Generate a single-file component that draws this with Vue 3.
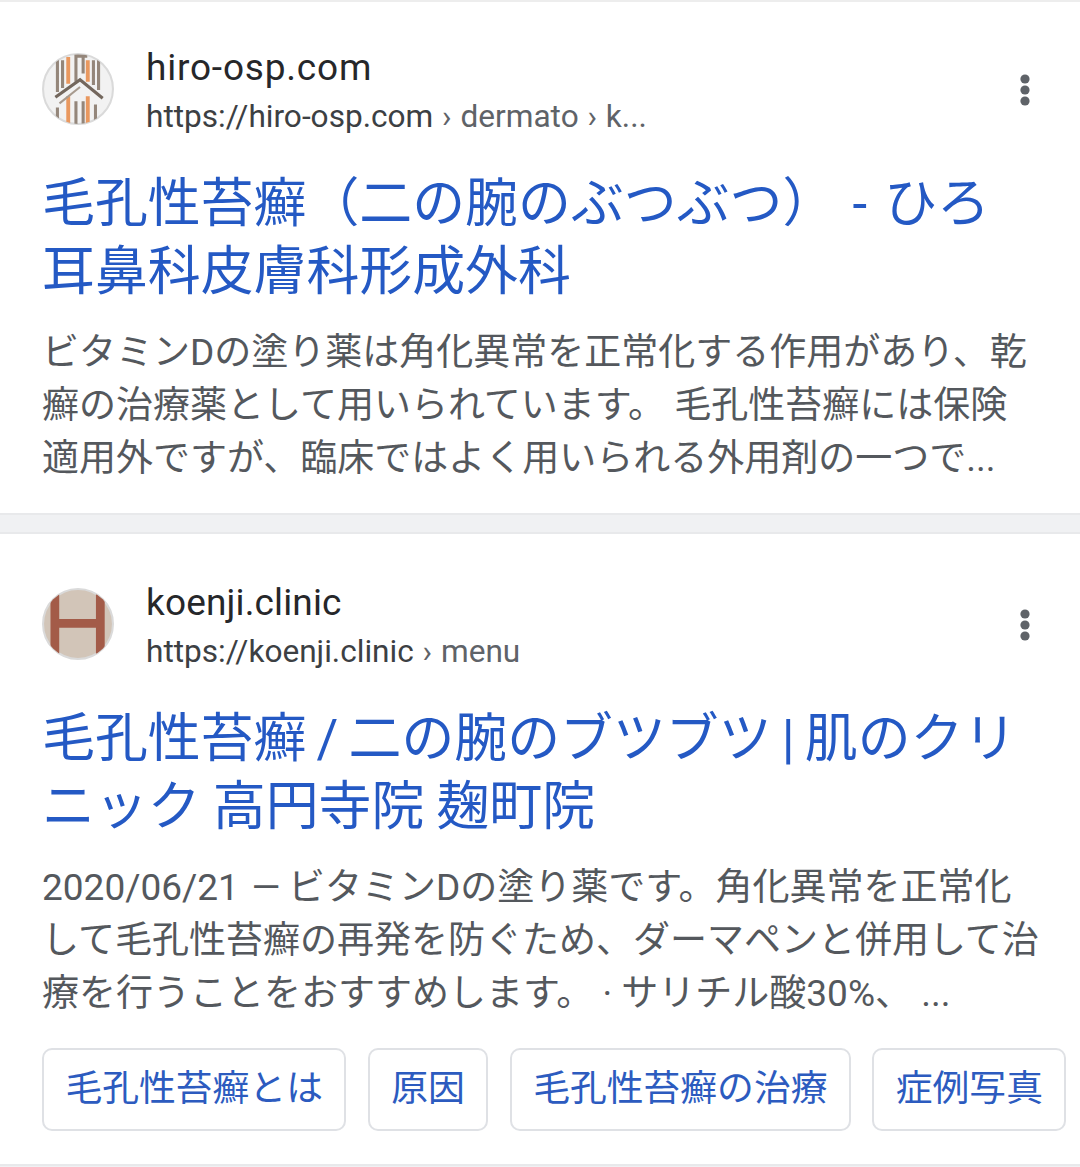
<script setup>
const results = [
  {
    site: "hiro-osp.com",
    url: "https://hiro-osp.com",
    path: " › dermato › k...",
    logo: "hiro",
    title: ["毛孔性苔癬（二の腕のぶつぶつ） - ひろ", "耳鼻科皮膚科形成外科"],
    snippet: [
      "ビタミンDの塗り薬は角化異常を正常化する作用があり、乾",
      "癬の治療薬として用いられています。 毛孔性苔癬には保険",
      "適用外ですが、臨床ではよく用いられる外用剤の一つで...",
    ],
    chips: [],
  },
  {
    site: "koenji.clinic",
    url: "https://koenji.clinic",
    path: " › menu",
    logo: "koenji",
    title: ["毛孔性苔癬 / 二の腕のブツブツ | 肌のクリ", "ニック 高円寺院 麹町院"],
    snippet: [
      "2020/06/21\u2004—\u2009ビタミンDの塗り薬です。角化異常を正常化",
      "して毛孔性苔癬の再発を防ぐため、ダーマペンと併用して治",
      "療を行うことをおすすめします。 · サリチル酸30%、 ...",
    ],
    chips: ["毛孔性苔癬とは", "原因", "毛孔性苔癬の治療", "症例写真"],
  },
];
</script>

<template>
  <div class="page">
    <div v-for="item in results" :key="item.site" class="card" :class="item.logo">
      <div class="head">
        <div class="logo">
          <svg v-if="item.logo === 'hiro'" width="72" height="72" viewBox="0 0 70 70">
            <clipPath id="hiro-clip"><circle cx="35" cy="35" r="34" /></clipPath>
            <circle cx="35" cy="35" r="34" fill="#f2f2f2" stroke="#dadada" stroke-width="2" />
            <g clip-path="url(#hiro-clip)" fill="none">
              <g stroke="#94867a" stroke-width="3">
                <path d="M15 7V38M20 7V34M33 28V3H44M40 3V20M50 7V31M55 7V36" />
                <path d="M15 53V66M33 47V70M40 47V70M52 50V66" />
              </g>
              <g stroke="#e9985f" stroke-width="3.8">
                <path d="M25.5 4V30M44.5 7V28M25.5 42V68M44.5 42V68" />
              </g>
              <path d="M13 43L37 26L59 44" stroke="#73675d" stroke-width="3" />
              <path d="M17 49L37 33" stroke="#a79a8e" stroke-width="2" />
            </g>
          </svg>
          <svg v-else width="72" height="72" viewBox="0 0 70 70">
            <clipPath id="koenji-clip"><circle cx="35" cy="35" r="34" /></clipPath>
            <circle cx="35" cy="35" r="34" fill="#d2c5b8" stroke="#dadada" stroke-width="2" />
            <path clip-path="url(#koenji-clip)" d="M12.5 6V64M56.7 6V64M12.5 34.5H56.7" fill="none" stroke="#a35b48" stroke-width="8.5" />
          </svg>
        </div>
        <div class="source">
          <div class="site">{{ item.site }}</div>
          <div class="url">{{ item.url }}<span class="path">{{ item.path }}</span></div>
        </div>
        <svg class="more" width="12" height="34" viewBox="0 0 12 34">
          <circle cx="6" cy="6" r="4.6" fill="#5f6368" />
          <circle cx="6" cy="17" r="4.6" fill="#5f6368" />
          <circle cx="6" cy="28" r="4.6" fill="#5f6368" />
        </svg>
      </div>
      <div class="title">
        <div v-for="line in item.title" :key="line">{{ line }}</div>
      </div>
      <div class="snippet">
        <div v-for="line in item.snippet" :key="line">{{ line }}</div>
      </div>
      <div v-if="item.chips.length" class="chips">
        <div v-for="chip in item.chips" :key="chip" class="chip">{{ chip }}</div>
      </div>
    </div>
  </div>
</template>

<style>
html, body {
  background: #fff;
  overflow: hidden;
}
</style>

<style scoped>
.page {
  width: 1080px;
  height: 1167px;
  overflow: hidden;
  background: #f0f1f3;
  font-family: Roboto, "Noto Sans CJK JP", sans-serif;
  border-top: 2px solid #ededed;
  box-sizing: border-box;
}

.card {
  background: #fff;
  padding: 51px 0 0 42px;
  border-bottom: 2px solid #e8e9eb;
  margin-bottom: 17px;
  height: 460px;
}

.card + .card {
  border-top: 2px solid #e8e9eb;
  padding-top: 54px;
  height: 576px;
  margin-bottom: 0;
}

.head {
  display: flex;
  align-items: flex-start;
  height: 72px;
  position: relative;
}

.logo {
  width: 72px;
  height: 72px;
  margin-right: 32px;
}

.source {
  white-space: nowrap;
  margin-top: -8px;
}

.site {
  font-size: 37px;
  line-height: 46px;
  color: #26272a;
}

.hiro .site {
  letter-spacing: 0.8px;
}

.koenji .site {
  letter-spacing: 0.15px;
}

.url {
  font-size: 31.6px;
  line-height: 52px;
  color: #3c4043;
}

.path {
  color: #5f6368;
  word-spacing: 1px;
}

.more {
  position: absolute;
  right: 49px;
  top: 20px;
}

.title {
  margin-top: 45px;
  font-size: 52.9px;
  line-height: 68px;
  color: #2459c4;
  white-space: nowrap;
}

.hiro .title {
  word-spacing: 4px;
}

.koenji .title {
  word-spacing: -1px;
}

.koenji .title div:first-child {
  word-spacing: -3px;
}

.snippet {
  margin-top: 20px;
  font-size: 37px;
  line-height: 53px;
  color: #54585d;
  white-space: nowrap;
}

.chips {
  display: flex;
  gap: 21.5px;
  margin-top: 28px;
}

.chip {
  height: 83px;
  padding: 0 21.4px;
  box-sizing: border-box;
  border: 2px solid #dfe1e5;
  border-radius: 10px;
  font-size: 36.8px;
  line-height: 78px;
  color: #2c5bbf;
  white-space: nowrap;
}
</style>
